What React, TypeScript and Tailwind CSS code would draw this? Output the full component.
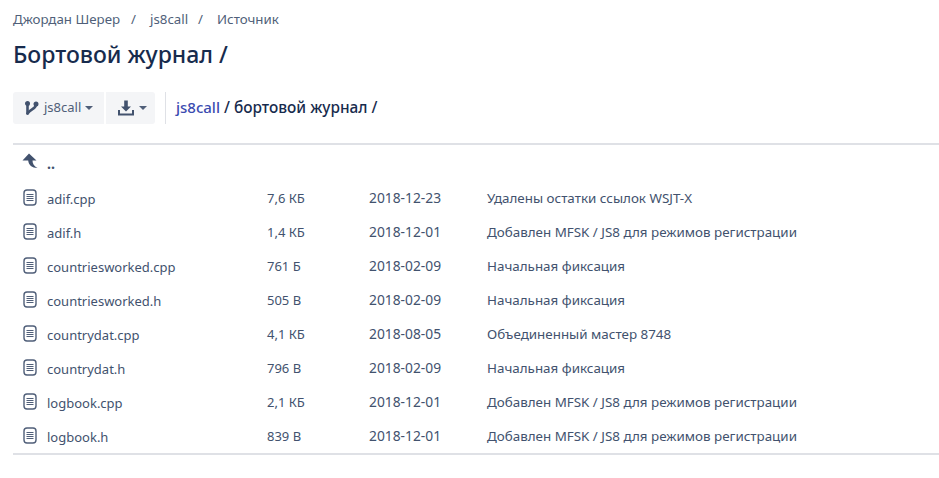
const files = [
  { name: "adif.cpp", size: "7,6 КБ", date: "2018-12-23", msg: "Удалены остатки ссылок WSJT-X" },
  { name: "adif.h", size: "1,4 КБ", date: "2018-12-01", msg: "Добавлен MFSK / JS8 для режимов регистрации" },
  { name: "countriesworked.cpp", size: "761 Б", date: "2018-02-09", msg: "Начальная фиксация" },
  { name: "countriesworked.h", size: "505 В", date: "2018-02-09", msg: "Начальная фиксация" },
  { name: "countrydat.cpp", size: "4,1 КБ", date: "2018-08-05", msg: "Объединенный мастер 8748" },
  { name: "countrydat.h", size: "796 В", date: "2018-02-09", msg: "Начальная фиксация" },
  { name: "logbook.cpp", size: "2,1 КБ", date: "2018-12-01", msg: "Добавлен MFSK / JS8 для режимов регистрации" },
  { name: "logbook.h", size: "839 В", date: "2018-12-01", msg: "Добавлен MFSK / JS8 для режимов регистрации" },
]

function FileIcon() {
  return (
    <svg width="14" height="17" viewBox="0 0 14 17" fill="none" stroke="#505f79" className="mb-[2px] shrink-0">
      <rect x="1" y="1" width="12" height="15" rx="3" strokeWidth="1.4" />
      <path d="M3.5 5.5h7M3.5 7.5h7M3.5 9.5h7M3.5 11.5h7" strokeWidth="1.1" />
    </svg>
  )
}

function UpIcon() {
  return (
    <svg width="16" height="16" viewBox="0 0 16 16" fill="#42526e" className="mb-[4px] shrink-0">
      <path d="M7 0.5L14.5 7.5H10.5C10.5 10.5 12 13 15.5 15C10 15 6.5 12 6.2 7.5H0.5L7 0.5Z" />
    </svg>
  )
}

function BranchIcon() {
  return (
    <svg width="15" height="15" viewBox="0 0 15 15" fill="none" stroke="#42526e" strokeWidth="2.6" strokeLinecap="round">
      <path d="M3.5 2.5V12.5" />
      <path d="M12 3.5C12 8 7 7.5 3.5 12.5" />
      <circle cx="3.5" cy="2.5" r="1.2" fill="#42526e" />
      <circle cx="12" cy="3" r="1.2" fill="#42526e" />
    </svg>
  )
}

function DownloadIcon() {
  return (
    <svg width="18" height="16" viewBox="0 0 18 16" fill="#42526e">
      <path d="M7.2 0.5H10.8V6.5H14L9 11.5L4 6.5H7.2V0.5Z" />
      <path d="M1 10H3V13.5H15V10H17V15.5H1V10Z" />
    </svg>
  )
}

function Caret() {
  return <span className="ml-1 h-0 w-0 border-x-[4px] border-t-[4px] border-x-transparent border-t-[#505f79]" />
}

export default function App() {
  return (
    <div className="min-h-[478px] w-[939px] overflow-hidden bg-white pl-[13px] font-['Noto_Sans',sans-serif] text-[#42526e]">
      <div className="flex h-[38px] items-center pt-[1px] text-[13.3px] text-[#505f79]">
        <span>Джордан Шерер</span>
        <span className="ml-[11px] mr-[14px]">/</span>
        <span>js8call</span>
        <span className="mx-[10px]">/</span>
        <span className="ml-[4px]">Источник</span>
      </div>
      <h1 className="h-[32px] text-[23px] leading-[32px] font-medium text-[#172b4d]">Бортовой журнал /</h1>
      <div className="mt-[22px] flex h-[32px] items-center">
        <div className="flex h-[32px] w-[91px] items-center rounded-l-[3px] bg-[#f4f5f7] pl-[11px] text-[13px] text-[#505f79]">
          <BranchIcon />
          <span className="ml-[5px]">js8call</span>
          <Caret />
        </div>
        <div className="ml-[2px] flex h-[32px] w-[49px] items-center rounded-r-[3px] bg-[#f4f5f7] pl-[11px]">
          <DownloadIcon />
          <Caret />
        </div>
        <div className="ml-[10px] h-[32px] w-[1px] bg-[#dfe1e6]" />
        <div className="ml-[10px] text-[15.4px] font-medium text-[#172b4d]">
          <span className="text-[15px] text-[#3b4cb0]">js8call</span> / бортовой журнал /
        </div>
      </div>
      <div className="mt-[19px] border-y-2 border-[#dfe1e6]">
        <div className="flex h-[36px] items-center pl-[9px]">
          <UpIcon />
          <span className="ml-[9px] pt-[1px] text-[14px] font-bold">..</span>
        </div>
        {files.map((f) => (
          <div key={f.name} className="flex h-[34px] items-center pl-[10px] text-[13px] text-[#42526e]">
            <FileIcon />
            <span className="ml-[10px] w-[220px] pt-[3px]">{f.name}</span>
            <span className="w-[102px] pt-[1px]">{f.size}</span>
            <span className="w-[118px] pt-[1px] text-[13.8px]">{f.date}</span>
            <span className="pt-[1px] text-[13.4px]">{f.msg}</span>
          </div>
        ))}
      </div>
    </div>
  )
}
